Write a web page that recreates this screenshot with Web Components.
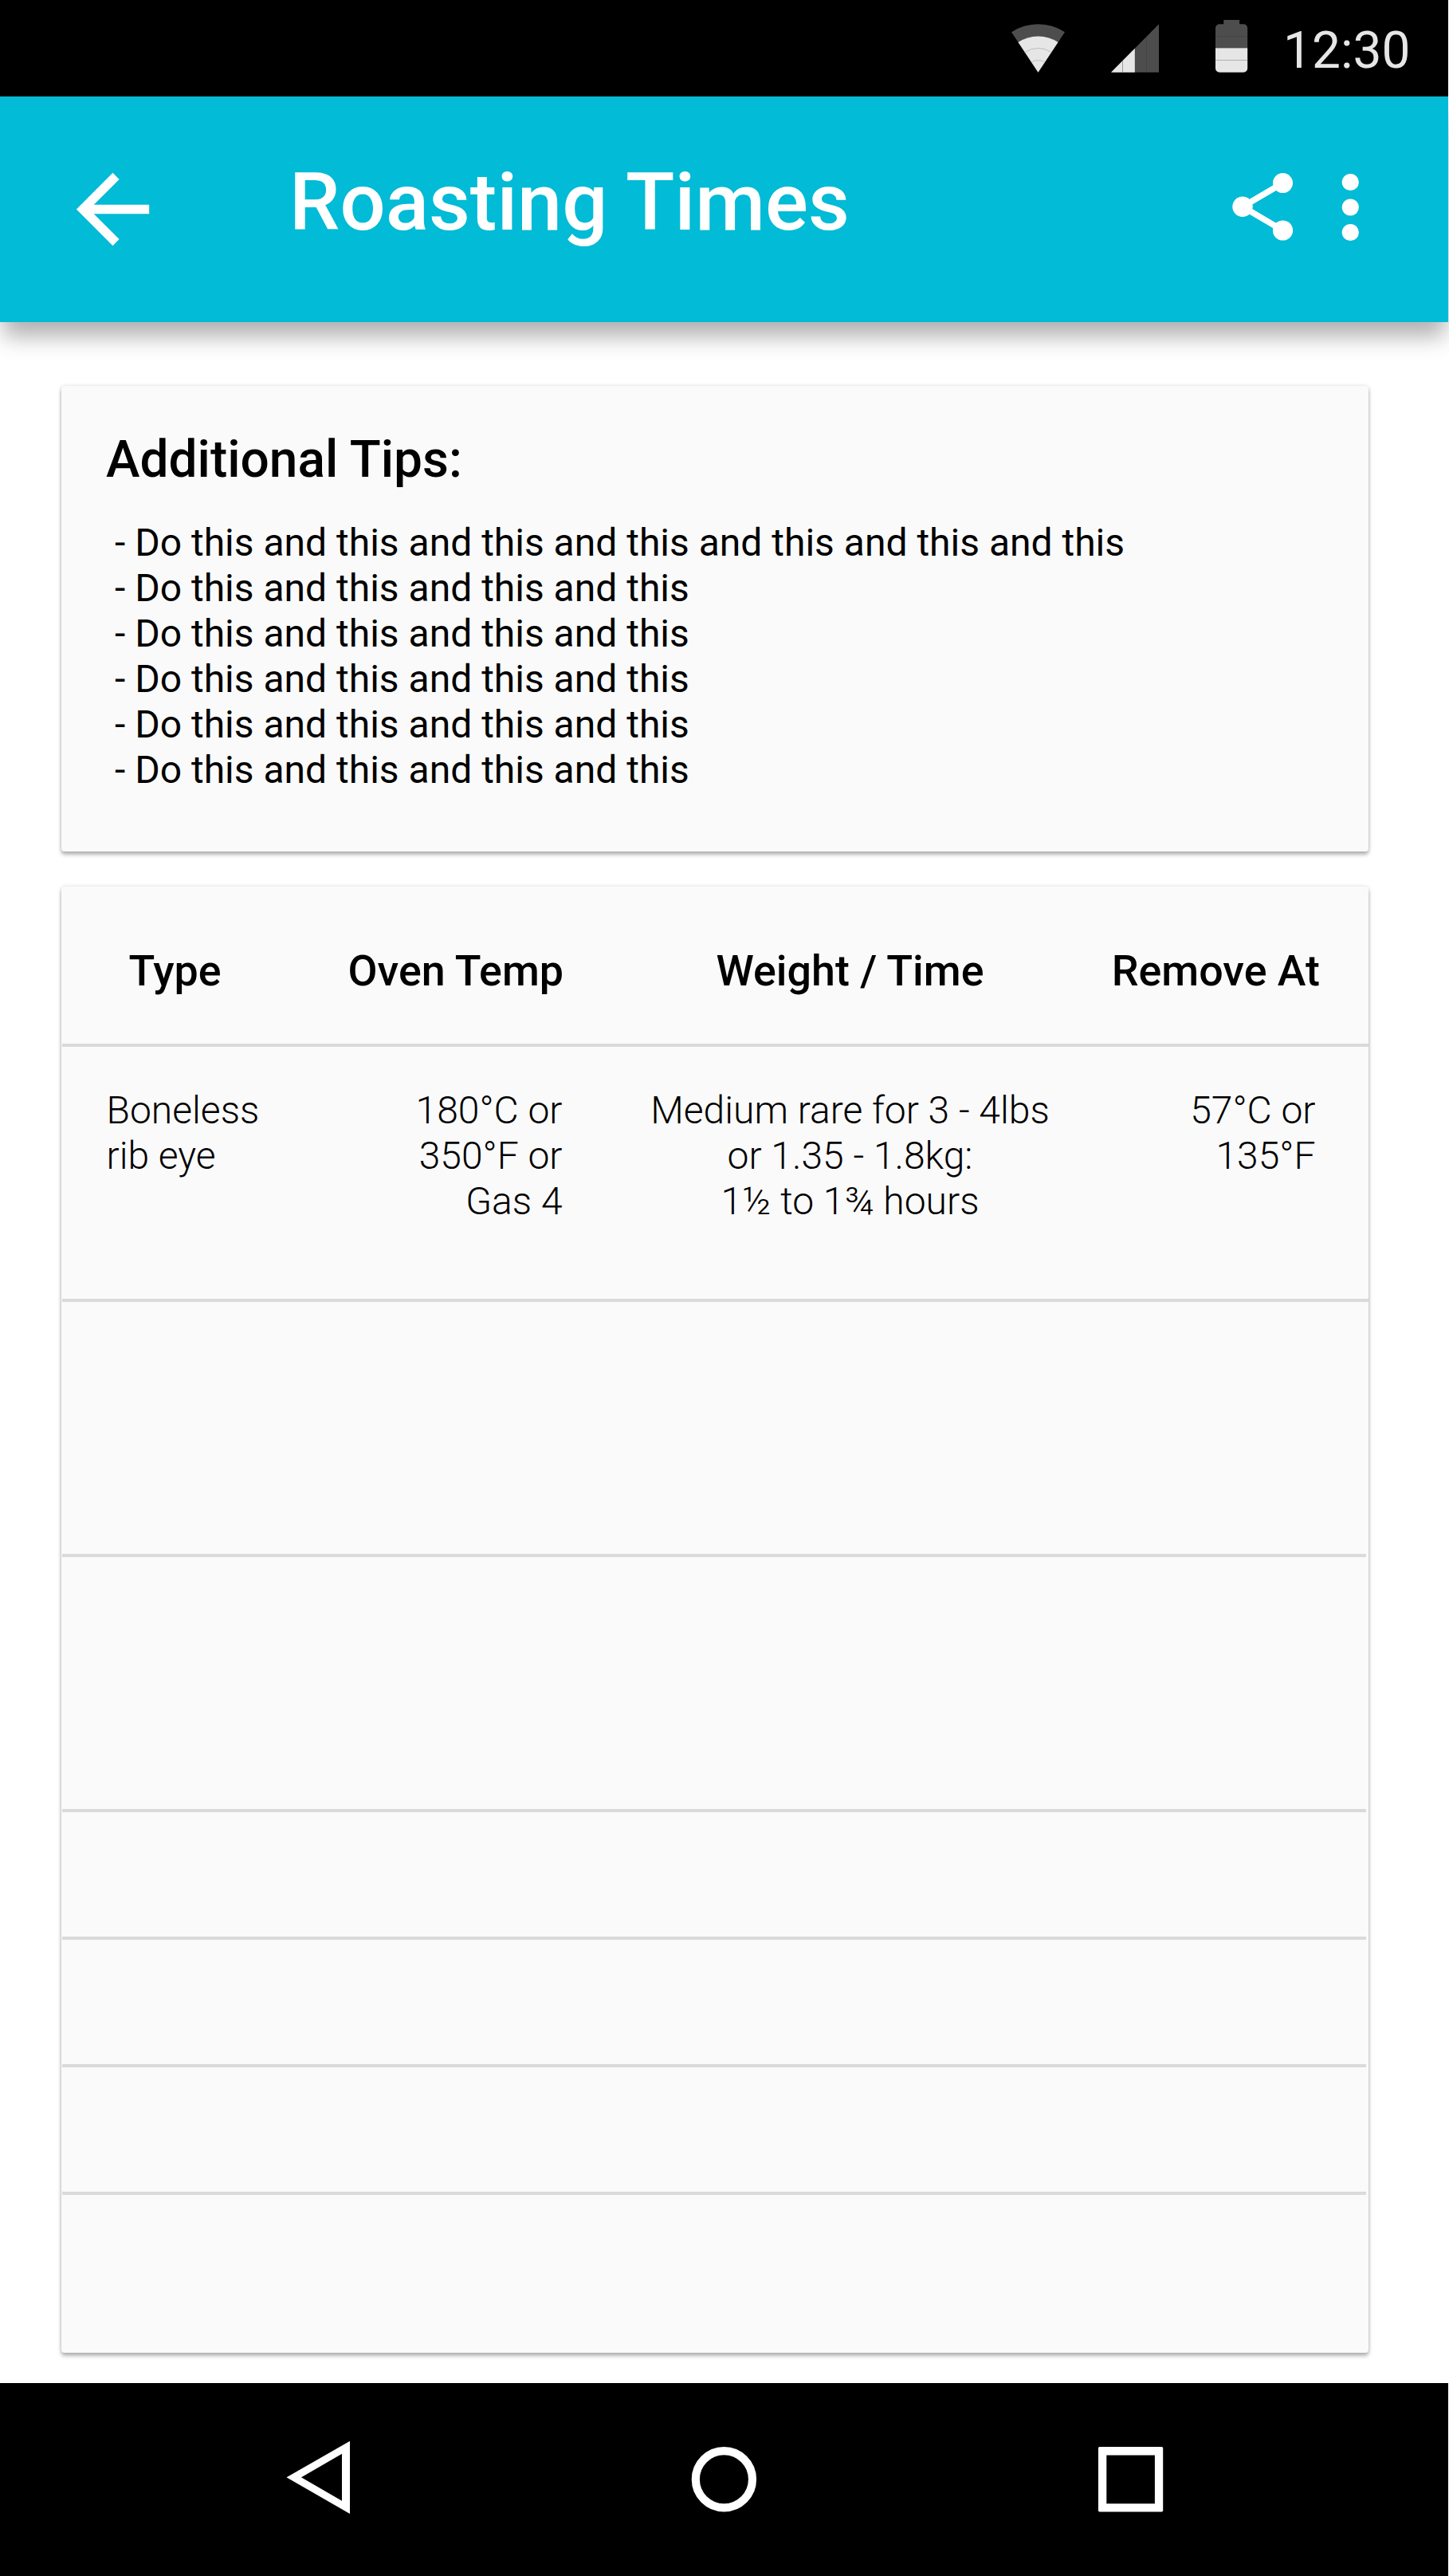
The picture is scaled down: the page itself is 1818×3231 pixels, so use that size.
<!DOCTYPE html>
<html lang="en">
<head>
<meta charset="utf-8">
<title>Roasting Times</title>
<style>
html,body{margin:0;background:#fff}
body{font-family:Roboto,"Liberation Sans",sans-serif;color:#000;width:1818px;height:3231px;overflow:hidden}
</style>
</head>
<body>
<roasting-app></roasting-app>
<script>
const define = (name, html) => customElements.define(name, class extends HTMLElement {
  constructor() {
    super();
    const t = document.createElement('template');
    t.innerHTML = html;
    this.attachShadow({mode: 'open'}).append(t.content.cloneNode(true));
  }
});

define('status-bar', `
<style>
:host{display:flex;box-sizing:border-box;width:1817px;height:121px;background:#000;color:#e6e6e6;padding-left:1268px}
svg{display:block;flex:none}
.time{font-size:64px;line-height:76px;margin:26px 0 0 42px;white-space:nowrap}
</style>
<svg width="300" height="121" viewBox="1268 0 300 121">
  <path fill="#4d4d4d" d="M1302.5 90.7L1269 40.3A60.4 60.4 0 0 1 1336 40.3Z"/>
  <path fill="#e6e6e6" d="M1302.5 90.7L1277.5 52.9A45.3 45.3 0 0 1 1327.5 52.9Z"/>
  <path fill="none" stroke="#b8b8b8" stroke-width=".9" d="M1285.8 65.5A30.2 30.2 0 0 1 1319.2 65.5M1294.1 78.1A15.1 15.1 0 0 1 1310.9 78.1"/>
  <path fill="#4d4d4d" d="M1394 90.7L1454 30.3V90.7Z"/>
  <path fill="#e6e6e6" d="M1394 90.7L1423.8 60.7V90.7Z"/>
  <path stroke="#999" d="M1408.5 76V90.7"/><path stroke="#444" d="M1438.5 46V90.7"/>
  <path fill="#4d4d4d" d="M1535.3 25H1555.1V30.3H1560.2A5 5 0 0 1 1565.2 35.3V60.3H1525V35.3A5 5 0 0 1 1530 30.3H1535.3Z"/>
  <path fill="#e6e6e6" d="M1525 60.3H1565.2V85.7A5 5 0 0 1 1560.2 90.7H1530A5 5 0 0 1 1525 85.7Z"/>
  <path stroke="#b0b0b0" d="M1525 75.5H1565.2"/><path stroke="#444" d="M1525 45.5H1565.2"/>
</svg>
<div class="time"><slot></slot></div>`);

define('app-bar', `
<style>
:host{display:flex;box-sizing:border-box;width:1817px;height:283px;background:#02bbd6;color:#fff;padding-left:73px;
  box-shadow:0 22px 26px -4px rgba(0,0,0,.31)}
svg{display:block;flex:none}
.back{margin-top:73px}
h1{margin:73px 0 0 153px;flex:1;font-size:100.8px;line-height:120px;font-weight:500;white-space:nowrap}
.acts{display:flex;width:284px;flex:none}
</style>
<svg class="back" width="137" height="137" viewBox="0 0 24 24"><path fill="#fff" d="M20 11H7.83l5.59-5.59L12 4l-8 8 8 8 1.41-1.41L7.83 13H20v-2z"/></svg>
<h1><slot></slot></h1>
<div class="acts">
<svg width="284" height="283" viewBox="1533 121 284 283"><g fill="#fff">
  <circle cx="1559" cy="259.3" r="12.7"/><circle cx="1609.5" cy="229.6" r="12.5"/><circle cx="1609.5" cy="289" r="12.6"/>
  <path fill="none" stroke="#fff" stroke-width="7.6" d="M1609.5 229.6L1559 259.3L1609.5 289"/>
  <circle cx="1694.3" cy="228.5" r="10.6"/><circle cx="1694.3" cy="260" r="10.6"/><circle cx="1694.3" cy="291.5" r="10.6"/></g></svg>
</div>`);

define('paper-card', `
<style>
:host{display:block;box-sizing:border-box;width:1640px;background:#fafafa;border-radius:4px;
  box-shadow:0 4px 5px rgba(0,0,0,.28),0 0 5px rgba(0,0,0,.14)}
</style><slot></slot>`);

define('tips-list', `
<style>
:host{display:block;box-sizing:border-box;height:584px;padding:55px 0 0 56px}
h2{margin:0;font-size:64px;line-height:76px;font-weight:500}
div{margin:37px 0 0 11px;font-size:48px}
</style><h2><slot name="title"></slot></h2><div><slot></slot></div>`);

define('tip-item', `<style>:host{display:block;height:57px;line-height:57px;white-space:nowrap}</style>- <slot></slot>`);

define('table-row', `
<style>
:host{display:flex;flex-direction:column;box-sizing:border-box}
.cells{flex:1;display:grid;grid-template-columns:333px 297px 716px 294px;font-size:48px;line-height:57px;font-weight:300;padding-top:51px;white-space:nowrap}
:host([head]) .cells{font-size:53.8px;line-height:64px;font-weight:500;padding-top:74px}
.rule{height:4px;background:#dadada;margin-left:1px}
:host([short]) .rule{margin-right:3px}
:host([last]) .rule{display:none}
</style>
<div class="cells"><slot></slot></div><div class="rule"></div>`);

define('table-cell', `
<style>
:host{display:block}
:host([kind=type]){padding-left:56.5px}
:host([kind=typehead]){text-align:center;padding-right:48px}
:host([kind=temp]){text-align:right;padding-right:1.5px}
:host([kind=temphead]){text-align:right}
:host([kind=weight]){text-align:center;padding-left:3px}
:host([kind=weighthead]){text-align:center;padding-left:3px}
:host([kind=remove]){justify-self:end;text-align:right;padding-right:66.5px}
:host([kind=removehead]){justify-self:end;text-align:right;padding-right:61px}
</style><slot></slot>`);

define('nav-bar', `
<style>
:host{display:flex;justify-content:flex-start;align-items:flex-start;box-sizing:border-box;width:1817px;height:242px;background:#000;padding:70px 0 0 358px}
svg{display:block;flex:none}
.home{margin-left:427px}.recent{margin-left:428px}
</style>
<svg width="82" height="96" viewBox="358 3059 82 96"><path fill="#fff" fill-rule="evenodd" d="M359.5 3107.3L439 3061.7V3153ZM378 3107.3L429 3136.7V3077.7Z"/></svg>
<svg class="home" width="83" height="96" viewBox="867 3059 83 96"><circle cx="908.4" cy="3109.8" r="35.6" fill="none" stroke="#fff" stroke-width="10.2" /></svg>
<svg class="recent" width="84" height="96" viewBox="1378 3059 84 96"><path fill="#fff" fill-rule="evenodd" d="M1379.5 3069H1457.5Q1459.2 3069 1459.2 3070.5V3149Q1459.2 3150.4 1457.5 3150.4H1379.5Q1378 3150.4 1378 3149V3070.5Q1378 3069 1379.5 3069ZM1388.3 3079.5V3140.3H1448.9V3079.5Z"/></svg>`);

define('roasting-app', `
<style>
:host{display:flex;flex-direction:column;width:1818px;height:3231px;background:#fff}
main{flex:1;display:flex;flex-direction:column;gap:44px;padding:80px 0 0 77px}
</style>
<status-bar>12:30</status-bar>
<app-bar>Roasting Times</app-bar>
<main>
  <paper-card><tips-list>
    <span slot="title">Additional Tips:</span>
    <tip-item>Do this and this and this and this and this and this and this</tip-item>
    <tip-item>Do this and this and this and this</tip-item>
    <tip-item>Do this and this and this and this</tip-item>
    <tip-item>Do this and this and this and this</tip-item>
    <tip-item>Do this and this and this and this</tip-item>
    <tip-item>Do this and this and this and this</tip-item>
  </tips-list></paper-card>
  <paper-card>
    <table-row head style="height:201px">
      <table-cell kind="typehead">Type</table-cell>
      <table-cell kind="temphead">Oven Temp</table-cell>
      <table-cell kind="weighthead">Weight / Time</table-cell>
      <table-cell kind="removehead">Remove At</table-cell>
    </table-row>
    <table-row style="height:320px">
      <table-cell kind="type">Boneless<br>rib eye</table-cell>
      <table-cell kind="temp">180°C or<br>350°F or<br>Gas 4</table-cell>
      <table-cell kind="weight">Medium rare for 3 - 4lbs<br>or 1.35 - 1.8kg:<br>1½ to 1¾ hours</table-cell>
      <table-cell kind="remove">57°C or<br>135°F</table-cell>
    </table-row>
    <table-row short style="height:320px"></table-row>
    <table-row short style="height:320px"></table-row>
    <table-row short style="height:160px"></table-row>
    <table-row short style="height:160px"></table-row>
    <table-row short style="height:160px"></table-row>
    <table-row last style="height:198px"></table-row>
  </paper-card>
</main>
<nav-bar></nav-bar>`);
</script>
</body>
</html>
